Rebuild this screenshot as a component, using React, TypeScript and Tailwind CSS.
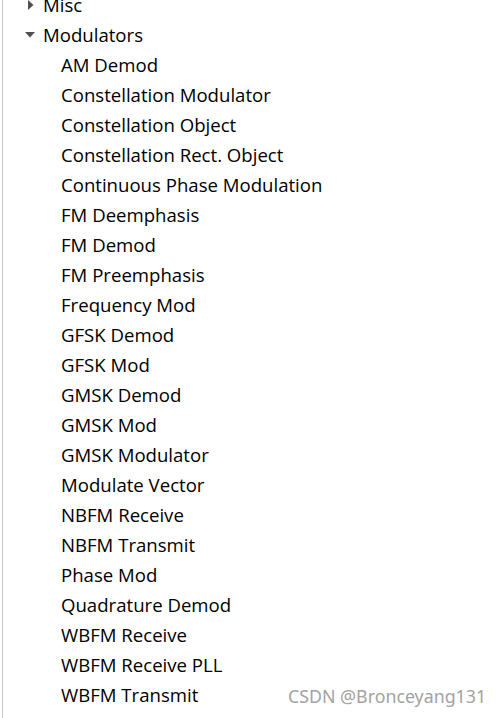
import React from 'react';

const modulators = [
  'AM Demod',
  'Constellation Modulator',
  'Constellation Object',
  'Constellation Rect. Object',
  'Continuous Phase Modulation',
  'FM Deemphasis',
  'FM Demod',
  'FM Preemphasis',
  'Frequency Mod',
  'GFSK Demod',
  'GFSK Mod',
  'GMSK Demod',
  'GMSK Mod',
  'GMSK Modulator',
  'Modulate Vector',
  'NBFM Receive',
  'NBFM Transmit',
  'Phase Mod',
  'Quadrature Demod',
  'WBFM Receive',
  'WBFM Receive PLL',
  'WBFM Transmit',
];

function Caret({ open }: { open: boolean }) {
  return open ? (
    <svg width="10" height="6" viewBox="0 0 10 6" className="mr-[8px]">
      <path d="M0 0 H10 L5 5.5 Z" fill="#505050" />
    </svg>
  ) : (
    <svg width="6" height="10" viewBox="0 0 6 10" className="mr-[9px]">
      <path d="M0 0 V10 L5.5 5 Z" fill="#505050" />
    </svg>
  );
}

export default function App() {
  return (
    <div className="relative h-[718px] w-[502px] overflow-hidden bg-white" style={{ fontFamily: '"Open Sans", "Noto Sans", sans-serif' }}>
      <div className="flex h-full">
        <div className="ml-[2px] w-px bg-[#cbc6c1]" />
        <div className="-mt-[10px] flex flex-col text-[18.6px] text-black">
          <div className="flex h-[30px] items-center pl-[25px]">
            <Caret open={false} />
            <span>Misc</span>
          </div>
          <div className="flex h-[30px] items-center pl-[22px]">
            <Caret open={true} />
            <span>Modulators</span>
          </div>
          {modulators.map((m) => (
            <div key={m} className="flex h-[30px] items-center pl-[58px]">
              {m}
            </div>
          ))}
        </div>
      </div>
      <div
        className="absolute left-[288px] top-[683px] text-[17.8px] text-[#a3a3a3]"
        style={{ fontFamily: '"Noto Sans", sans-serif' }}
      >
        CSDN @Bronceyang131
      </div>
    </div>
  );
}
